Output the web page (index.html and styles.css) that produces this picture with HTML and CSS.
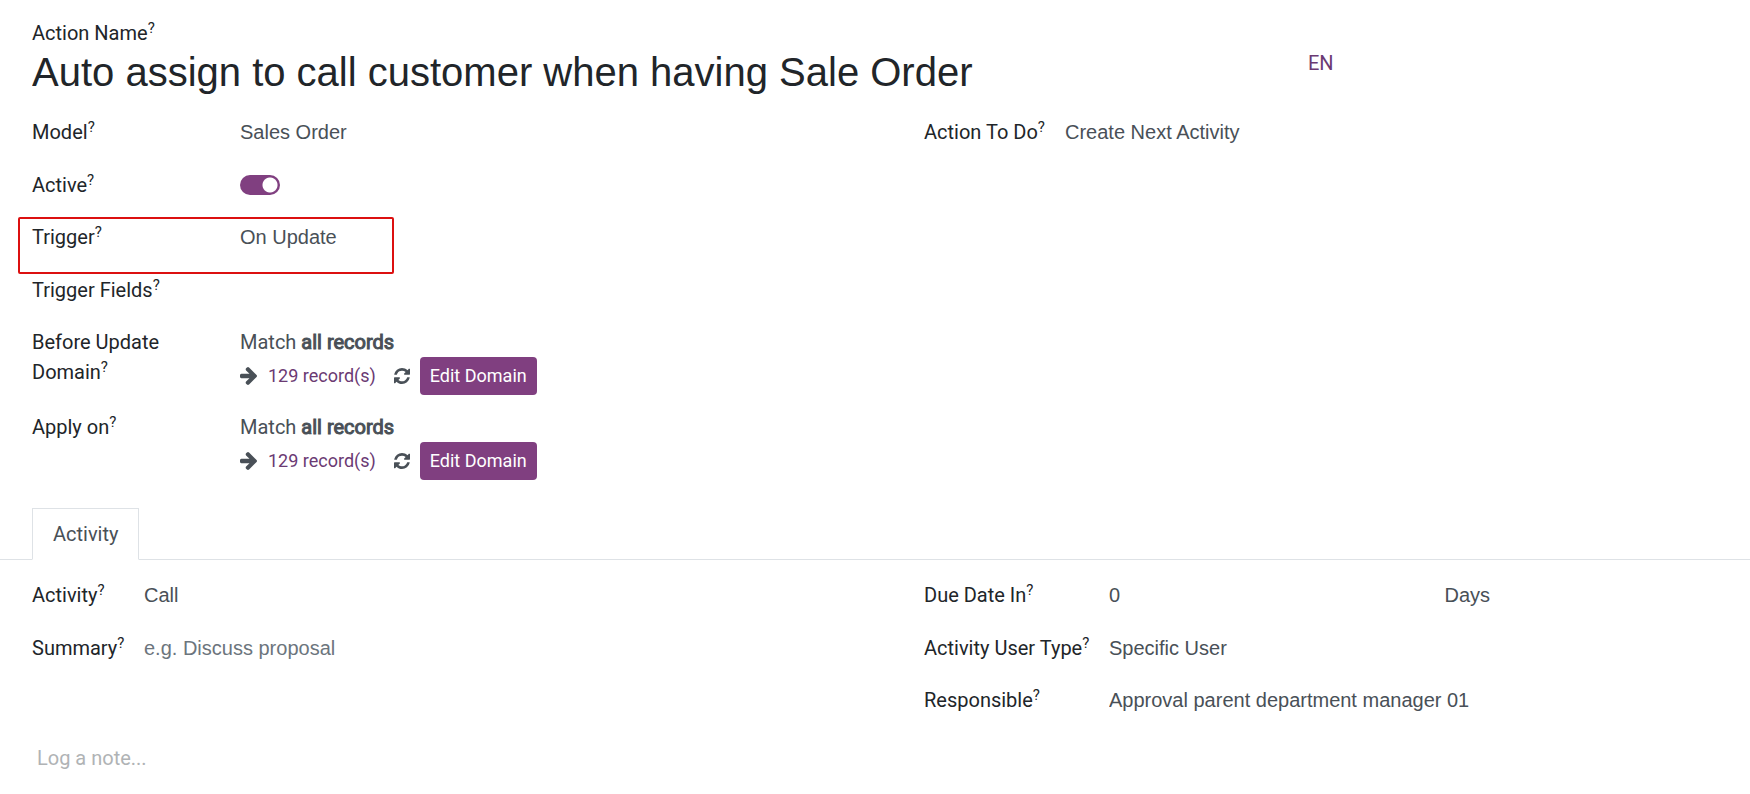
FILE: index.html
```html
<!DOCTYPE html>
<html lang="en">

<head>
    <meta charset="UTF-8">
    <meta name="viewport" content="width=device-width, initial-scale=1">
    <title>Automated Action</title>
    <link rel="stylesheet" href="styles.css">
</head>

<body>
    <svg class="sprite" aria-hidden="true">
        <symbol id="icon-arrow" viewBox="0 181 1472 1558">
            <path d="M1472 960q0 54-37 91l-651 651q-39 37-91 37-51 0-90-37l-75-75q-38-38-38-91t38-91l293-293h-704q-52 0-84.500-37.500t-32.500-90.500v-128q0-53 32.500-90.500t84.500-37.500h704l-293-294q-38-36-38-90t38-90l75-75q38-38 90-38 53 0 91 38l651 651q37 35 37 90z" />
        </symbol>
        <symbol id="icon-refresh" viewBox="128 128 1536 1536">
            <path d="M1639 1056q0 5-1 7-64 268-268 434.500t-478 166.500q-146 0-282.500-55t-243.500-157l-129 129q-19 19-45 19t-45-19-19-45v-448q0-26 19-45t45-19h448q26 0 45 19t19 45-19 45l-137 137q71 66 161 102t187 36q134 0 250-65t186-179q11-17 53-117 8-23 30-23h192q13 0 22.500 9.500t9.500 22.500zm25-800v448q0 26-19 45t-45 19h-448q-26 0-45-19t-19-45 19-45l138-138q-148-137-349-137-134 0-250 65t-186 179q-11 17-53 117-8 23-30 23h-199q-13 0-22.500-9.500t-9.500-22.500v-7q65-268 270-434.500t480-166.500q146 0 284 55.500t245 156.500l130-129q19-19 45-19t45 19 19 45z" />
        </symbol>
    </svg>

    <form class="sheet">
        <div class="title">
            <label for="actionName">Action Name<sup>?</sup></label>
            <div class="title-row">
                <input id="actionName" type="text" value="Auto assign to call customer when having Sale Order">
                <button type="button" class="lang">EN</button>
            </div>
        </div>

        <div class="groups">
            <div class="group group-main">
                <div class="field">
                    <label for="model">Model<sup>?</sup></label>
                    <input id="model" type="text" value="Sales Order">
                </div>
                <div class="field">
                    <label for="active">Active<sup>?</sup></label>
                    <input id="active" type="checkbox" class="switch" checked>
                </div>
                <div class="field field-marked">
                    <label for="trigger">Trigger<sup>?</sup></label>
                    <select id="trigger">
                        <option>On Update</option>
                    </select>
                </div>
                <div class="field">
                    <label for="triggerFields">Trigger Fields<sup>?</sup></label>
                    <input id="triggerFields" type="text">
                </div>
                <div class="field field-domain">
                    <div class="label">Before Update Domain<sup>?</sup></div>
                    <div class="domain">
                        <div>Match <strong>all records</strong></div>
                        <div class="domain-actions">
                            <a href="#" class="records"><svg class="icon-arrow"><use href="#icon-arrow" /></svg>129 record(s)</a>
                            <button type="button" class="refresh" aria-label="Refresh"><svg><use href="#icon-refresh" /></svg></button>
                            <button type="button" class="edit">Edit Domain</button>
                        </div>
                    </div>
                </div>
                <div class="field field-domain">
                    <div class="label">Apply on<sup>?</sup></div>
                    <div class="domain">
                        <div>Match <strong>all records</strong></div>
                        <div class="domain-actions">
                            <a href="#" class="records"><svg class="icon-arrow"><use href="#icon-arrow" /></svg>129 record(s)</a>
                            <button type="button" class="refresh" aria-label="Refresh"><svg><use href="#icon-refresh" /></svg></button>
                            <button type="button" class="edit">Edit Domain</button>
                        </div>
                    </div>
                </div>
            </div>

            <div class="group group-todo">
                <div class="field">
                    <label for="todo">Action To Do<sup>?</sup></label>
                    <select id="todo">
                        <option>Create Next Activity</option>
                    </select>
                </div>
            </div>
        </div>

        <div class="tabs">
            <button type="button" class="tab">Activity</button>
        </div>

        <div class="groups">
            <div class="group group-activity">
                <div class="field">
                    <label for="activity">Activity<sup>?</sup></label>
                    <input id="activity" type="text" value="Call">
                </div>
                <div class="field">
                    <label for="summary">Summary<sup>?</sup></label>
                    <input id="summary" type="text" placeholder="e.g. Discuss proposal">
                </div>
            </div>

            <div class="group group-due">
                <div class="field">
                    <label for="dueDate">Due Date In<sup>?</sup></label>
                    <div class="due">
                        <input id="dueDate" type="text" value="0">
                        <select aria-label="Due type">
                            <option>Days</option>
                        </select>
                    </div>
                </div>
                <div class="field">
                    <label for="userType">Activity User Type<sup>?</sup></label>
                    <select id="userType">
                        <option>Specific User</option>
                    </select>
                </div>
                <div class="field">
                    <label for="responsible">Responsible<sup>?</sup></label>
                    <input id="responsible" type="text" value="Approval parent department manager 01">
                </div>
            </div>
        </div>

        <textarea class="note" rows="1" placeholder="Log a note..." aria-label="Log a note"></textarea>
    </form>
</body>

</html>
```

FILE: styles.css
```css
* {
    box-sizing: border-box;
}

body {
    margin: 0;
    background-color: white;
    color: #212529;
    font-family: Roboto, sans-serif;
    font-size: 20px;
    line-height: 30px;
}

.sprite {
    display: none;
}

.sheet {
    padding-top: 18px;
}

sup {
    font-size: 15px;
    line-height: 0;
    vertical-align: 7px;
}

input,
select,
textarea {
    display: block;
    width: 100%;
    margin: 0;
    padding: 0;
    border: none;
    background: none;
    color: #495057;
    font-family: "Liberation Sans", Arial, sans-serif;
    font-size: 20px;
    line-height: 30px;
    appearance: none;
}

input,
select {
    height: 30px;
}

input::placeholder {
    color: #6c757d;
}

button {
    margin: 0;
    padding: 0;
    border: none;
    background: none;
    color: inherit;
    font-family: inherit;
    cursor: pointer;
}

/* Title */
.title {
    padding: 0 32px;
}

.title label {
    display: block;
}

.title-row {
    display: grid;
    grid-template-columns: 3fr 1fr;
    column-gap: 46px;
    align-items: start;
    justify-items: start;
}

.title-row input {
    height: 48px;
    color: #212529;
    font-size: 40px;
    line-height: 48px;
}

.lang {
    color: #6b3a73;
    font-size: 20px;
    line-height: 30px;
}

/* Field groups */
.groups {
    display: grid;
    grid-template-columns: 1fr 1fr;
    column-gap: 98px;
    padding: 0 32px;
}

.title + .groups {
    margin-top: 21px;
}

.field {
    display: grid;
    padding-bottom: 23px;
}

.field:nth-child(even) {
    padding-bottom: 22px;
}

.group-main .field {
    grid-template-columns: 152px 1fr;
    column-gap: 56px;
}

.group-todo .field {
    grid-template-columns: 141px 1fr;
}

.group-activity .field {
    grid-template-columns: 112px 1fr;
}

.group-due .field {
    grid-template-columns: 185px 1fr;
}

.switch {
    width: 40px;
    height: 20px;
    margin-top: 5px;
    border-radius: 10px;
    background: #803f80 radial-gradient(circle at 30px 10px, white 7px, transparent 8px);
}

.field-marked {
    position: relative;
}

.field-marked::after {
    content: "";
    position: absolute;
    top: -5px;
    left: -14px;
    width: 372px;
    height: 53px;
    border: 2px solid #dc1010;
    border-radius: 2px;
    pointer-events: none;
}

.group-main .field-domain {
    padding-bottom: 17px;
}

.domain {
    color: #495057;
}

.domain strong {
    font-weight: normal;
    -webkit-text-stroke: 1px;
}

.domain-actions {
    display: flex;
    align-items: center;
}

.records {
    display: flex;
    align-items: center;
    gap: 11px;
    color: #6b3a73;
    font-size: 18px;
    text-decoration: none;
}

.icon-arrow {
    width: 17px;
    height: 18px;
    fill: #495057;
}

.refresh {
    display: flex;
    margin: 0 10px 0 18px;
}

.refresh svg {
    width: 16px;
    height: 16px;
    fill: #495057;
}

.edit {
    padding: 4px 10px;
    border-radius: 4px;
    background-color: #803f80;
    color: white;
    font-size: 18px;
    line-height: 30px;
}

/* Notebook */
.tabs {
    display: flex;
    margin: 11px 0 20px;
    padding-left: 32px;
    border-bottom: 1px solid #dee2e6;
}

.tab {
    margin-bottom: -1px;
    padding: 10px 20px;
    border: 1px solid #dee2e6;
    border-bottom-color: white;
    background-color: white;
    color: #495057;
    font-size: 20px;
    line-height: 30px;
}

.due {
    display: grid;
    grid-template-columns: 1fr 1fr;
    column-gap: 62px;
}

/* Chatter */
.note {
    margin-top: 5px;
    padding: 0 37px;
    font-family: inherit;
    resize: none;
}

.note::placeholder {
    color: #b0b3b5;
}
```
